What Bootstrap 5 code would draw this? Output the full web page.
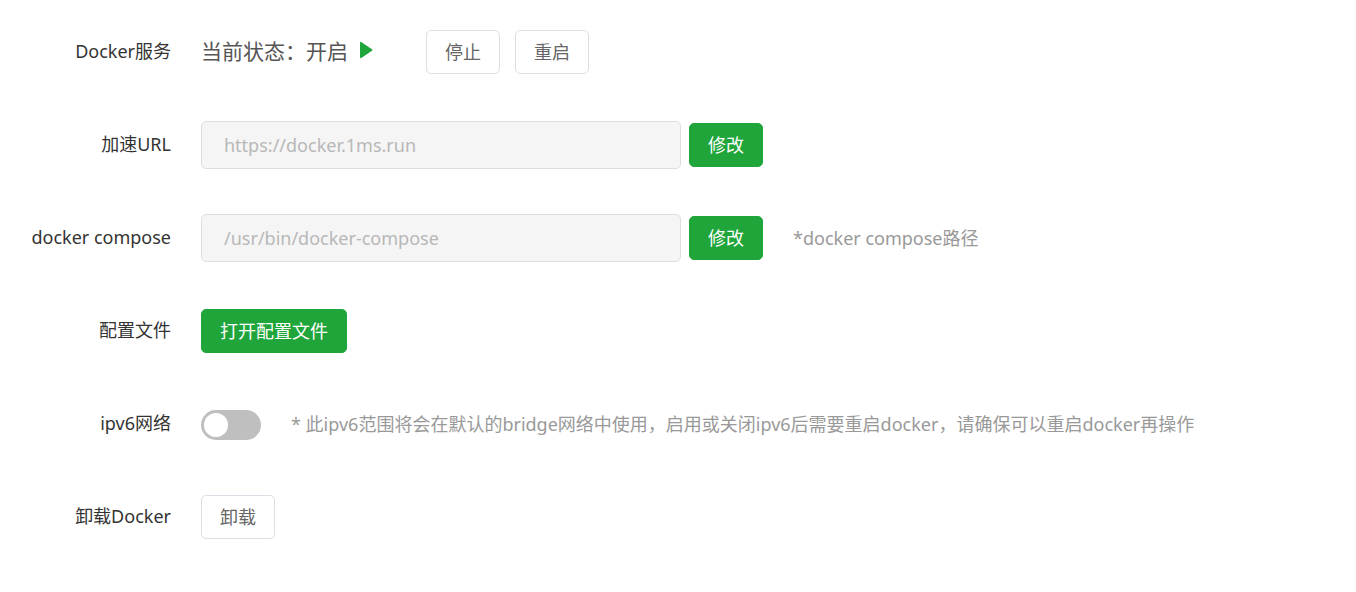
<!DOCTYPE html>
<html lang="zh-CN">
<head>
<meta charset="utf-8">
<meta name="viewport" content="width=device-width, initial-scale=1">
<title>Docker</title>
<link href="https://cdn.jsdelivr.net/npm/bootstrap@5.3.0/dist/css/bootstrap.min.css" rel="stylesheet">
<style>
  body { font-family: "Noto Sans", "Noto Sans CJK SC", sans-serif; font-size: 18px; line-height: 24px; color: #333; }
  .settings { padding: 28px 16px 28px 0; gap: 45px; }
  .setting { min-height: 48px; }
  .setting-name { width: 171px; margin-right: 30px; padding-bottom: 2px; flex-shrink: 0; text-align: right; }
  .state { padding-bottom: 2px; font-size: 21px; color: #555; }
  .play { width: 14px; height: 18px; margin: 0 53px 4px 11px; }
  .btn { --bs-btn-font-size: 18px; --bs-btn-line-height: 24px; --bs-btn-padding-x: 18px; --bs-btn-padding-y: 9px; --bs-btn-border-radius: 5px; flex-shrink: 0; }
  .btn-plain { --bs-btn-color: #666; --bs-btn-bg: #fff; --bs-btn-border-color: #dcdfe6; --bs-btn-hover-color: #20a53a; --bs-btn-hover-border-color: #20a53a; }
  .btn-plain + .btn-plain { margin-left: 15px; }
  .btn-green { --bs-btn-color: #fff; --bs-btn-bg: #20a53a; --bs-btn-border-color: #20a53a; --bs-btn-hover-color: #fff; --bs-btn-hover-bg: #1d9534; --bs-btn-hover-border-color: #1d9534; }
  .setting .form-control { width: 480px; height: 48px; padding: 0 22px; font-size: 18px; border-color: #dcdfe0; border-radius: 5px; }
  .setting .form-control:disabled { background: #f5f5f5; color: #b8b8b8; -webkit-text-fill-color: #b8b8b8; }
  .hint { margin-left: 30px; color: #999; }
  .setting .form-switch { min-height: 0; margin: 2px 0 0; padding: 0; line-height: 0; }
  .form-switch .form-check-input { width: 60px; height: 30px; margin: 0; border: 0; background-color: #bfbfbf; background-size: 30px; }
  .form-switch .form-check-input:not(:checked) { background-image: url("data:image/svg+xml,%3Csvg xmlns='http://www.w3.org/2000/svg' viewBox='0 0 30 30'%3E%3Ccircle cx='15' cy='15' r='12' fill='%23fff'/%3E%3C/svg%3E"); }
  .form-switch .form-check-input:checked { background-color: #20a53a; }
</style>
</head>
<body>
<main class="settings d-flex flex-column">
  <div class="setting d-flex align-items-center">
    <span class="setting-name">Docker服务</span>
    <span class="state">当前状态：开启</span>
    <svg class="play" viewBox="0 0 14 18" aria-hidden="true"><path d="M1 2.200Q1 .2 2.600 1.200L13 8.200Q14 9 13 9.800L2.600 16.800Q1 17.800 1 15.800Z" fill="#20a53a"/></svg>
    <button type="button" class="btn btn-plain">停止</button>
    <button type="button" class="btn btn-plain">重启</button>
  </div>
  <div class="setting d-flex align-items-center">
    <label class="setting-name" for="url">加速URL</label>
    <input id="url" type="text" class="form-control" value="https://docker.1ms.run" disabled>
    <button type="button" class="btn btn-green ms-2">修改</button>
  </div>
  <div class="setting d-flex align-items-center">
    <label class="setting-name" for="compose">docker compose</label>
    <input id="compose" type="text" class="form-control" value="/usr/bin/docker-compose" disabled>
    <button type="button" class="btn btn-green ms-2">修改</button>
    <span class="hint">*docker compose路径</span>
  </div>
  <div class="setting d-flex align-items-center">
    <span class="setting-name">配置文件</span>
    <button type="button" class="btn btn-green">打开配置文件</button>
  </div>
  <div class="setting d-flex align-items-center">
    <label class="setting-name" for="ipv6">ipv6网络</label>
    <div class="form-check form-switch"><input id="ipv6" type="checkbox" role="switch" class="form-check-input"></div>
    <span class="hint">* 此ipv6范围将会在默认的bridge网络中使用，启用或关闭ipv6后需要重启docker，请确保可以重启docker再操作</span>
  </div>
  <div class="setting d-flex align-items-center">
    <span class="setting-name">卸载Docker</span>
    <button type="button" class="btn btn-plain">卸载</button>
  </div>
</main>
<script src="https://cdn.jsdelivr.net/npm/bootstrap@5.3.0/dist/js/bootstrap.bundle.min.js"></script>
</body>
</html>
